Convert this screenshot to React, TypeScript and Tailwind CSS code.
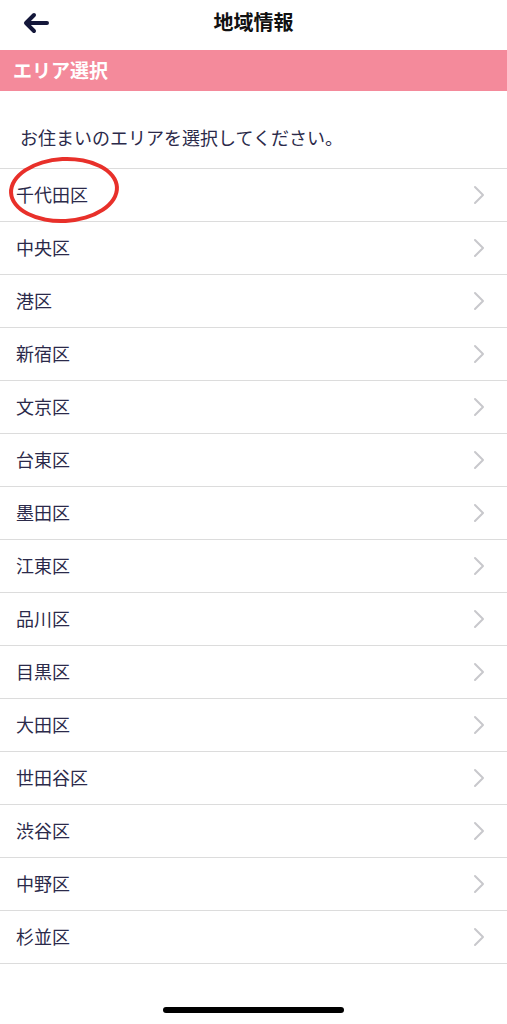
const wards = [
  '千代田区',
  '中央区',
  '港区',
  '新宿区',
  '文京区',
  '台東区',
  '墨田区',
  '江東区',
  '品川区',
  '目黒区',
  '大田区',
  '世田谷区',
  '渋谷区',
  '中野区',
  '杉並区',
];

const font = "font-['Hiragino_Sans','Noto_Sans_CJK_JP',sans-serif]";

function Chevron() {
  return (
    <svg width="12" height="20" viewBox="0 0 12 20" fill="none">
      <path d="M2 2l8 8-8 8" stroke="#c8c8cc" strokeWidth="2" strokeLinecap="round" strokeLinejoin="round" />
    </svg>
  );
}

export default function App() {
  return (
    <div className={`min-h-[1024px] w-[507px] bg-white flex flex-col ${font}`}>
      {/* Header */}
      <header className="relative h-[50px] flex items-center justify-center">
        <button className="absolute left-[20px] top-[9px] p-0.5">
          <svg width="28" height="24" viewBox="0 0 28 24" fill="none">
            <path d="M25 12H5M12 4l-8 8 8 8" stroke="#14173a" strokeWidth="4" strokeLinecap="round" strokeLinejoin="round" />
          </svg>
        </button>
        <h1 className="text-[20px] font-bold text-[#111] -mt-[6px]">地域情報</h1>
      </header>

      {/* Section bar */}
      <div className="h-[41px] bg-[#f48a9b] flex items-center px-[13px]">
        <span className="text-white text-[19px] font-bold">エリア選択</span>
      </div>

      <p className="pt-[32px] pb-[17px] px-[20px] text-[18px] leading-[28px] text-[#2b2a4a]">
        お住まいのエリアを選択してください。
      </p>

      {/* Ward list */}
      <ul className="border-t border-[#dcdcdc]">
        {wards.map((w, i) => (
          <li key={w} className="relative h-[53px] border-b border-[#dcdcdc] flex items-center justify-between pl-[16px] pr-[22px]">
            <span className="text-[18px] leading-[24px] text-[#2b2a4a] -mt-[3px]">{w}</span>
            <Chevron />
            {i === 0 && (
              <span className="absolute left-[9px] top-[-12px] w-[110px] h-[66px] rounded-[50%] border-[4px] border-[#e8302a] rotate-[-3deg]" />
            )}
          </li>
        ))}
      </ul>

      <div className="flex-1" />
      <div className="flex justify-center pb-[11px]">
        <div className="w-[181px] h-[6px] rounded-full bg-black" />
      </div>
    </div>
  );
}
